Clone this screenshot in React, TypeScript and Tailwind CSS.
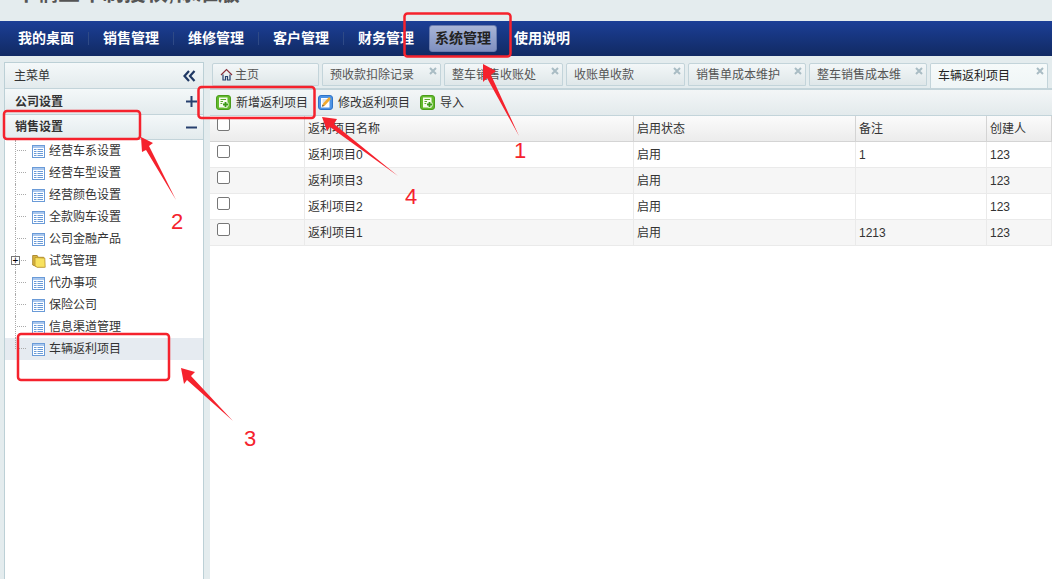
import React from "react";

const font = { fontFamily: '"Liberation Sans","Noto Sans CJK SC",sans-serif' };

function GridIcon() {
  return (
    <svg width="13" height="13" viewBox="0 0 13 13" className="shrink-0">
      <rect x="0.5" y="0.5" width="12" height="12" fill="#fff" stroke="#6a9bd8" />
      <rect x="1" y="1" width="11" height="2" fill="#a9c7ee" />
      <path d="M2 4.5h9M2 6.5h9M2 8.5h9M2 10.5h9" stroke="#6a9bd8" />
      <path d="M5 4v7" stroke="#fff" />
    </svg>
  );
}

function Folder() {
  return (
    <svg width="14" height="14" viewBox="0 0 14 14" className="shrink-0">
      <path d="M0.7 1.5h4.5l1 1.8h5.5v9.5H5.2L0.7 11Z" fill="#d9b53f" stroke="#a8832a" strokeWidth="0.9" />
      <path d="M3 3.5l9.8 0.6 0.4 9.2H5.2L3 12Z" fill="#f8e25f" stroke="#b8922c" strokeWidth="0.8" />
    </svg>
  );
}

function PlusIcon() {
  return (
    <svg width="15" height="15" viewBox="0 0 15 15" className="shrink-0">
      <rect x="0.5" y="0.5" width="14" height="14" rx="2.5" fill="#63ba2c" stroke="#4b9c1b" />
      <rect x="3" y="2.5" width="8.5" height="10" fill="#f7fcee" />
      <path d="M4.5 4.5h5.5M4.5 6.5h2.5M4.5 8.5h2" stroke="#5aa92a" />
      <path d="M6.5 9.5h6M9.5 6.5v6" stroke="#f7fcee" strokeWidth="3.4" />
      <path d="M7 9.5h5M9.5 7v5" stroke="#3c9a17" strokeWidth="1.8" />
    </svg>
  );
}

function EditIcon() {
  return (
    <svg width="15" height="15" viewBox="0 0 15 15" className="shrink-0">
      <rect x="0.5" y="0.5" width="14" height="14" rx="2.5" fill="#4c93e6" stroke="#2f74c8" />
      <rect x="3" y="3" width="8.5" height="9.5" fill="#fff" />
      <path d="M4.5 5h5M4.5 7h3" stroke="#b8c8dc" />
      <path d="M5.5 10 12 3" stroke="#f0a92e" strokeWidth="2.6" />
      <path d="M3.8 11.8 4.6 9.2 6.4 10.9Z" fill="#7a5a20" />
    </svg>
  );
}

function Tab({ label, active, home, w }: { label: string; active?: boolean; home?: boolean; w: string }) {
  return (
    <div
      className={`${w} relative shrink-0 border border-[#c3d4da] rounded-t-[2px] ${
        active
          ? "h-[25px] border-b-0 bg-gradient-to-b from-[#f6fafa] to-[#eff5f6] text-[#222]"
          : "h-[23px] bg-gradient-to-b from-[#f3f7f8] to-[#dfe7e9] text-[#555]"
      } flex items-center pl-[7px] text-[12px]`}
    >
      {home && (
        <svg width="13" height="13" viewBox="0 0 13 13" className="mr-[2px]" fill="none" strokeWidth="1.2">
          <path d="M1 7 6.5 1.5 12 7" stroke="#8a2f3a" />
          <path d="M3 6.5V12h2.5V8.5h2V12H10V6.5" stroke="#27406e" />
        </svg>
      )}
      <span>{label}</span>
      {!home && (
        <svg width="8" height="8" viewBox="0 0 8 8" className="absolute top-[3px] right-[3px]">
          <path d="M1 1l6 6M7 1l-6 6" stroke="#a9bcc4" strokeWidth="2" />
        </svg>
      )}
    </div>
  );
}

function TreeRow({ label, active, folder, last }: { label: string; active?: boolean; folder?: boolean; last?: boolean }) {
  return (
    <div className={`relative h-[22px] flex items-center text-[12px] text-[#333] ${active ? "bg-[#e6ebf1]" : ""}`}>
      <span className={`ml-[10px] w-[11px] ${last ? "h-[11px] self-start" : "h-full"} border-l border-dotted border-[#aaa] shrink-0 relative`}>
        <span className="absolute left-[1px] right-0 top-[10px] border-t border-dotted border-[#aaa]" />
      </span>
      {folder && (
        <span className="absolute left-[6px] top-[6px] w-[9px] h-[9px] border border-[#777] bg-white flex items-center justify-center text-[10px] leading-none text-black">
          +
        </span>
      )}
      <span className="ml-[6px] flex items-center">{folder ? <Folder /> : <GridIcon />}</span>
      <span className={folder ? "ml-[3px]" : "ml-[4px]"}>{label}</span>
    </div>
  );
}

const rows = [
  ["返利项目0", "启用", "1", "123"],
  ["返利项目3", "启用", "", "123"],
  ["返利项目2", "启用", "", "123"],
  ["返利项目1", "启用", "1213", "123"],
];

const cols = "grid grid-cols-[95px_329px_222px_131px_1fr]";

function Annotations() {
  return (
    <svg className="absolute left-0 top-0 pointer-events-none" width="1052" height="579" viewBox="0 0 1052 579">
      <g fill="none" stroke="#f5222d" strokeWidth="2.5">
        <rect x="404.5" y="13.5" width="106" height="43" rx="3" />
        <rect x="4" y="111" width="136" height="28" rx="3" />
        <rect x="18" y="334" width="151" height="46" rx="3" />
        <rect x="198.5" y="87" width="116" height="31" rx="3" />
      </g>
      <g fill="#f5222d">
        <path d="M483 64 496 71 491 75 519 136 487 78 483 82Z" />
        <path d="M141 137 153 143 149 146 176 200 146 150 142 152Z" />
        <path d="M181 368 195 372 191 376 233 421 187 380 184 384Z" />
        <path d="M322 117 337 119 334 124 398 176 330 127 327 131Z" />
      </g>
      <g fill="#f5222d" fontSize="22" fontFamily='"Liberation Sans",sans-serif'>
        <text x="514" y="158">1</text>
        <text x="171" y="229">2</text>
        <text x="244" y="446">3</text>
        <text x="405" y="204">4</text>
      </g>
    </svg>
  );
}

const headerBar = "flex items-center justify-between text-[12px] text-[#333] bg-gradient-to-b from-[#f4f8f9] to-[#e3ebed] border-b border-[#c3d4da]";

export default function App() {
  return (
    <div className="relative w-[1052px] h-[579px] overflow-hidden bg-[#e4ecee]" style={font}>
      <div className="h-[21px] overflow-hidden">
        <div className="mt-[-21px] pl-[14px] text-[22px] leading-[28px] font-bold text-[#555]">车辆五年制授权,标准版</div>
      </div>
      <nav className="h-[35px] flex items-center bg-gradient-to-b from-[#1c3f97] to-[#112a63] pl-[18px] text-white font-bold text-[14px]">
        {["我的桌面", "销售管理", "维修管理", "客户管理", "财务管理"].map((t, i) => (
          <React.Fragment key={t}>
            <span className="w-[56px] shrink-0">{t}</span>
            <span className={`h-[13px] w-px bg-[#2f4a86] mx-[14px] ${i === 4 ? "invisible" : ""}`} />
          </React.Fragment>
        ))}
        <span className="ml-[-14px] w-[68px] h-[27px] rounded-[3px] border border-[#6a7cae] bg-gradient-to-b from-[#a9b5d6] to-[#7f90c0] text-[#222] flex items-center justify-center shrink-0">
          系统管理
        </span>
        <span className="ml-[17px]">使用说明</span>
      </nav>
      <div className="flex h-[523px] pt-[6px] pl-[4px]">
        <aside className="w-[200px] shrink-0 border border-b-0 border-[#bcd0d6] bg-white flex flex-col">
          <div className={`${headerBar} h-[26px] pl-[9px] pr-[7px]`}>
            <span>主菜单</span>
            <svg width="13" height="12" viewBox="0 0 13 12" fill="none" stroke="#1f3864" strokeWidth="2.2">
              <path d="M6 1 1.5 6 6 11M11.5 1 7 6l4.5 5" />
            </svg>
          </div>
          <div className={`${headerBar} h-[26px] pl-[10px] pr-[6px] font-bold`}>
            <span>公司设置</span>
            <svg width="11" height="11" viewBox="0 0 11 11" stroke="#27406e" strokeWidth="2">
              <path d="M0 5.5h11M5.5 0v11" />
            </svg>
          </div>
          <div className={`${headerBar} h-[25px] pl-[10px] pr-[6px] font-bold`}>
            <span>销售设置</span>
            <svg width="11" height="11" viewBox="0 0 11 11" stroke="#27406e" strokeWidth="2">
              <path d="M0 5.5h11" />
            </svg>
          </div>
          <div>
            {["经营车系设置", "经营车型设置", "经营颜色设置", "全款购车设置", "公司金融产品"].map((t) => (
              <TreeRow key={t} label={t} />
            ))}
            <TreeRow label="试驾管理" folder />
            {["代办事项", "保险公司", "信息渠道管理"].map((t) => (
              <TreeRow key={t} label={t} />
            ))}
            <TreeRow label="车辆返利项目" active last />
          </div>
        </aside>
        <main className="ml-[6px] flex-1 min-w-0 flex flex-col bg-white">
          <div className="h-[28px] bg-[#e4ecee] flex items-start gap-[3px] pl-[2px] pt-[1px] border-b-[2px] border-[#c3d4da] overflow-hidden">
            <Tab label="主页" home w="w-[107px]" />
            <Tab label="预收款扣除记录" w="w-[119px]" />
            <Tab label="整车销售收账处" w="w-[119px]" />
            <Tab label="收账单收款" w="w-[119px]" />
            <Tab label="销售单成本维护" w="w-[118px]" />
            <Tab label="整车销售成本维" w="w-[118px]" />
            <Tab label="车辆返利项目" active w="w-[118px]" />
          </div>
          <div className="h-[26px] flex items-center pl-[6px] text-[12px] text-[#333] bg-gradient-to-b from-[#f3f6f7] to-[#e3eaec] border-b border-[#c3d4da]">
            <PlusIcon />
            <span className="ml-[5px]">新增返利项目</span>
            <span className="ml-[10px]"><EditIcon /></span>
            <span className="ml-[5px]">修改返利项目</span>
            <span className="ml-[10px]"><PlusIcon /></span>
            <span className="ml-[5px]">导入</span>
          </div>
          <div className={`${cols} h-[26px] text-[12px] text-[#333] bg-gradient-to-b from-[#fbfbfb] to-[#ececec] border-b border-[#d4d4d4]`}>
            <div className="border-r border-[#d4d4d4] pl-[7px] pt-[2px]">
              <input type="checkbox" className="block appearance-none w-[13px] h-[13px] border border-[#777] rounded-[2px] bg-white" />
            </div>
            {["返利项目名称", "启用状态", "备注", "创建人"].map((h) => (
              <div key={h} className="border-r border-[#d4d4d4] pl-[3px] pt-[1px] flex items-center">{h}</div>
            ))}
          </div>
          {rows.map((r, i) => (
            <div key={r[0]} className={`${cols} h-[26px] text-[12px] text-[#333] border-b border-[#eaeaea] ${i % 2 ? "bg-[#f6f6f6]" : "bg-white"}`}>
              <div className="border-r border-[#eaeaea] pl-[7px] pt-[3px]">
                <input type="checkbox" className="block appearance-none w-[13px] h-[13px] border border-[#777] rounded-[2px] bg-white" />
              </div>
              {r.map((c, j) => (
                <div key={j} className="border-r border-[#eaeaea] pl-[3px] pt-[1px] flex items-center">{c}</div>
              ))}
            </div>
          ))}
        </main>
      </div>
      <Annotations />
    </div>
  );
}
